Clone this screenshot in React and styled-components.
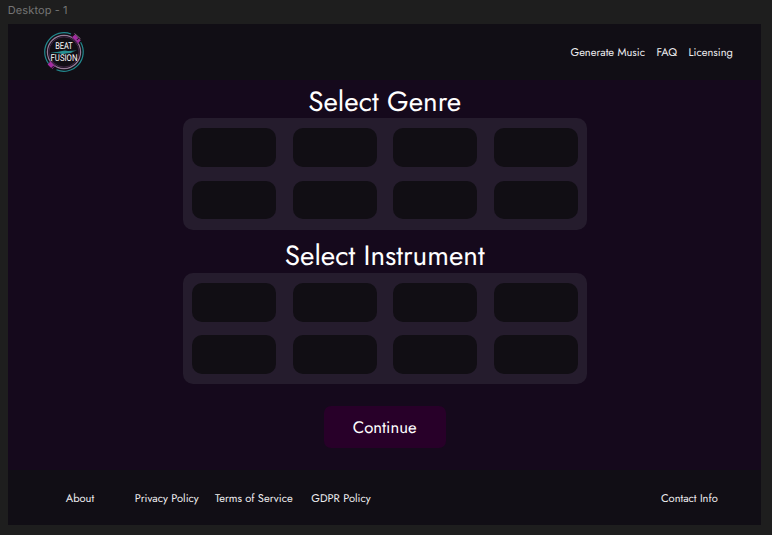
import React from "react";
import styled, { createGlobalStyle } from "styled-components";

const GlobalStyle = createGlobalStyle`
  * { box-sizing: border-box; }
  body { margin: 0; background: #1e1e1e; }
`;

const Canvas = styled.div`
  width: 772px;
  height: 535px;
  padding: 0 11px 0 8.4px;
  overflow: hidden;
  background: #1e1e1e;
  font-family: Jost, Lato, sans-serif;
  text-rendering: geometricPrecision;
  color: #fff;
`;

const FrameLabel = styled.div`
  height: 24px;
  line-height: 21px;
  margin-left: -0.6px;
  font-family: Inter, sans-serif;
  font-size: 11px;
  letter-spacing: 0.1px;
  color: #757575;
`;

const Frame = styled.div`
  display: flex;
  flex-direction: column;
  height: 501.4px;
  background: #15091c;
`;

const Header = styled.header`
  display: flex;
  align-items: center;
  justify-content: space-between;
  height: 55.5px;
  flex: none;
  padding: 0 27.5px 0 34.6px;
  background: #110e15;
`;

const Nav = styled.nav`
  display: flex;
  gap: 11px;
  padding-top: 2.5px;
`;

const NavLink = styled.a`
  width: ${(p) => p.$width}px;
  margin-left: ${(p) => p.$offset || 0}px;
  white-space: nowrap;
  font-size: 11.15px;
  line-height: 16px;
  color: #eeedf0;
`;

const Main = styled.main`
  display: flex;
  flex: 1;
  flex-direction: column;
  align-items: center;
`;

const Section = styled.section`
  width: 404px;
  height: 154.7px;
`;

const Heading = styled.h1`
  height: 38.7px;
  margin: 0;
  line-height: 44.4px;
  font-size: 27.9px;
  font-weight: 400;
  text-align: center;
  white-space: nowrap;
`;

const Panel = styled.div`
  display: grid;
  grid-template-columns: repeat(4, 83.6px);
  grid-template-rows: repeat(2, 38.6px);
  gap: 13.6px 16.9px;
  height: 111.4px;
  padding: 10.2px 9.8px;
  border-radius: 10px;
  background: #251c2d;
`;

const Tile = styled.button`
  padding: 0;
  border: 0;
  border-radius: 10px;
  background: #110e14;
`;

const ContinueButton = styled.button`
  width: 122px;
  height: 41.5px;
  margin-top: 17.4px;
  padding: 1.5px 0 0;
  border: 0;
  border-radius: 7px;
  background: #280029;
  color: #fff;
  font: inherit;
  font-size: 16.72px;
  text-rendering: geometricPrecision;
`;

const Footer = styled.footer`
  display: flex;
  align-items: center;
  flex: none;
  height: 55.8px;
  padding: 3px 43px 0 57.4px;
  background: #110e15;
`;

const Logo = () => (
  <svg width="42" height="42" viewBox="0 0 42 42" fill="none">
    <path d="M5.6 32.6A19.3 19.3 0 0 1 28 3" stroke="#23898f" strokeWidth="1.2" />
    <path d="M37.6 11.3A19.3 19.3 0 0 1 13.5 38.8" stroke="#23898f" strokeWidth="1.2" />
    <circle cx="21" cy="21" r="16.6" stroke="#967b98" strokeWidth="1.2" />
    <circle cx="21" cy="21" r="15.1" stroke="#512e57" strokeWidth="0.7" />
    <path d="M30.5 4.8 36.3 10.8M6 32 10.6 36.5" stroke="#a32ba1" strokeWidth="4" strokeDasharray="5 0.8" />
    <path d="M28 5.2 35.5 13M7 29.5 12.8 35.5" stroke="#641b68" strokeWidth="1" />
    <path d="M31.5 2.5 37.5 7.8" stroke="#96768e" strokeWidth="0.9" />
    <path d="M7 21.6 14 20.9 19 20.1 22 19.6 25 20 34 19.6 28 21.2 30 21.8 23 22.5 20 23.2 16 22.2Z" fill="#278e91" />
    <text x="21" y="18.1" textAnchor="middle" textLength="17.6" lengthAdjust="spacingAndGlyphs" fontFamily="Roboto, sans-serif" fontSize="9.4" fontWeight="400" fill="#fff">BEAT</text>
    <text x="21" y="30.3" textAnchor="middle" textLength="26.8" lengthAdjust="spacingAndGlyphs" fontFamily="Roboto, sans-serif" fontSize="9.4" fontWeight="400" fill="#fff">FUSION</text>
  </svg>
);

const Choices = ({ title }) => (
  <Section>
    <Heading>{title}</Heading>
    <Panel>
      {Array.from({ length: 8 }, (_, i) => (
        <Tile key={i} aria-label={`${title} ${i + 1}`} />
      ))}
    </Panel>
  </Section>
);

export default function App() {
  return (
    <>
      <GlobalStyle />
      <Canvas>
        <FrameLabel>Desktop - 1</FrameLabel>
        <Frame>
          <Header>
            <Logo />
            <Nav>
              <NavLink $width={75}>Generate Music</NavLink>
              <NavLink $width={21}>FAQ</NavLink>
              <NavLink $width={45}>Licensing</NavLink>
            </Nav>
          </Header>
          <Main>
            <Choices title="Select Genre" />
            <Choices title="Select Instrument" />
            <ContinueButton>Continue</ContinueButton>
          </Main>
          <Footer>
            <NavLink $width={29}>About</NavLink>
            <NavLink $width={64} $offset={40}>Privacy Policy</NavLink>
            <NavLink $width={78} $offset={16.3}>Terms of Service</NavLink>
            <NavLink $width={60} $offset={18.2}>GDPR Policy</NavLink>
            <NavLink $width={57} $offset={289.7}>Contact Info</NavLink>
          </Footer>
        </Frame>
      </Canvas>
    </>
  );
}
